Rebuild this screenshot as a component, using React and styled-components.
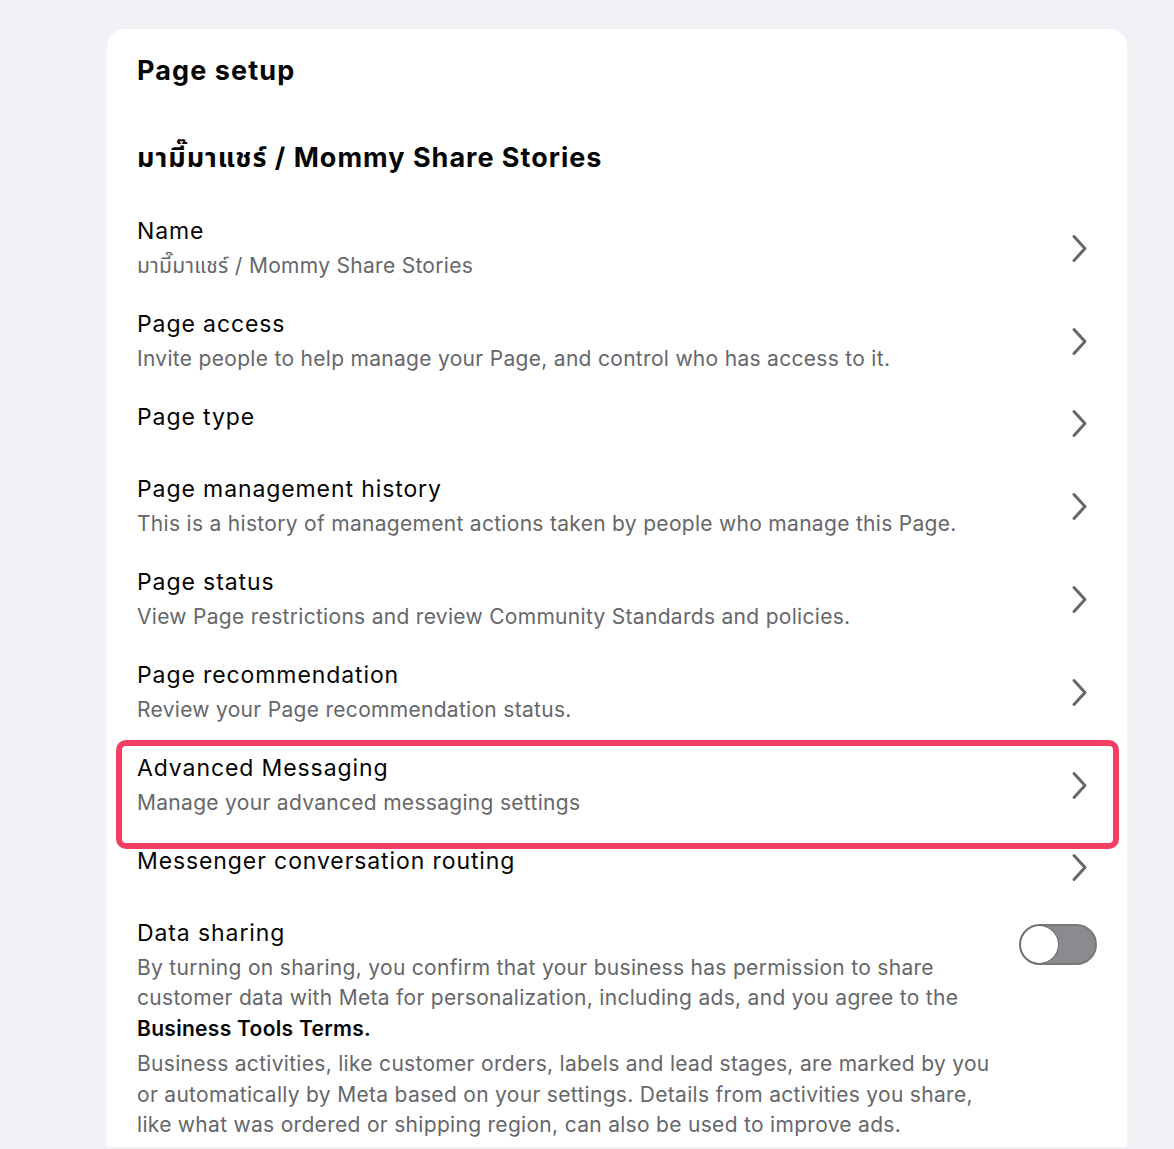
import React, { useState } from "react";
import styled, { createGlobalStyle, css } from "styled-components";

const GlobalStyle = createGlobalStyle`
    body {
        margin: 0;
        background: #f0f2f5;
        font-family: Inter, "Noto Sans", "Noto Sans Thai", "Loma", "Garuda", sans-serif;
        color: #050505;
        -webkit-font-smoothing: antialiased;
    }
`;

const settings = [
    { title: "Name", sub: "มามี๊มาแชร์ / Mommy Share Stories" },
    { title: "Page access", sub: "Invite people to help manage your Page, and control who has access to it." },
    { title: "Page type" },
    { title: "Page management history", sub: "This is a history of management actions taken by people who manage this Page." },
    { title: "Page status", sub: "View Page restrictions and review Community Standards and policies." },
    { title: "Page recommendation", sub: "Review your Page recommendation status." },
    { title: "Advanced Messaging", sub: "Manage your advanced messaging settings", highlighted: true },
    { title: "Messenger conversation routing" },
];

const Chevron = () => (
    <svg width="17" height="29" viewBox="0 0 17 29" fill="none">
        <path d="M3 2.5 L14 14.5 L3 26.5" stroke="#65676b" strokeWidth="3" strokeLinecap="round" strokeLinejoin="round" />
    </svg>
);

const App = () => {
    const [sharing, setSharing] = useState(false);

    return (
        <Page>
            <GlobalStyle />
            <Card>
                <Heading>Page setup</Heading>
                <PageName>มามี๊มาแชร์ / Mommy Share Stories</PageName>
                {settings.map((item) => (
                    <Row key={item.title} highlighted={item.highlighted}>
                        <RowText>
                            <RowTitle>{item.title}</RowTitle>
                            {item.sub && <RowSub>{item.sub}</RowSub>}
                        </RowText>
                        <ChevronBox>
                            <Chevron />
                        </ChevronBox>
                    </Row>
                ))}
                <ToggleRow>
                    <RowText>
                        <RowTitle>Data sharing</RowTitle>
                        <Paragraph>
                            By turning on sharing, you confirm that your business has permission to share
                            <br />
                            customer data with Meta for personalization, including ads, and you agree to the
                            <br />
                            <Strong>Business Tools Terms.</Strong>
                        </Paragraph>
                        <Paragraph>
                            Business activities, like customer orders, labels and lead stages, are marked by you
                            <br />
                            or automatically by Meta based on your settings. Details from activities you share,
                            <br />
                            like what was ordered or shipping region, can also be used to improve ads.
                        </Paragraph>
                    </RowText>
                    <Switch on={sharing} onClick={() => setSharing(!sharing)} aria-label="Data sharing" />
                </ToggleRow>
            </Card>
        </Page>
    );
};

const Page = styled.div`
    padding: 29px 47px 0 107px;
`;

const Card = styled.div`
    background: #ffffff;
    border-radius: 18px 18px 0 0;
    padding: 22px 30px 6px;
`;

const Heading = styled.h1`
    margin: 0;
    font-size: 27px;
    line-height: 40px;
    font-weight: 700;
    letter-spacing: 1.1px;
`;

const PageName = styled.h2`
    margin: 49px 0 26px;
    font-size: 27px;
    line-height: 36px;
    font-weight: 700;
    letter-spacing: 1px;
`;

const Row = styled.div`
    position: relative;
    display: flex;
    align-items: center;
    min-height: 43px;
    padding: 14px 0 14.2px;

    ${(p) =>
        p.highlighted &&
        css`
            &::after {
                content: "";
                position: absolute;
                top: 1px;
                left: -21px;
                right: -22px;
                bottom: -17px;
                border: 6px solid #f43e64;
                border-radius: 10px;
                pointer-events: none;
            }
        `}
`;

const RowText = styled.div`
    flex: 1;
    align-self: flex-start;
`;

const RowTitle = styled.div`
    font-size: 23px;
    line-height: 30px;
    font-weight: 400;
    letter-spacing: 0.9px;
    color: #050505;
`;

const RowSub = styled.div`
    margin-top: 5px;
    font-size: 21px;
    line-height: 30px;
    letter-spacing: 0.3px;
    color: #65676b;
`;

const ChevronBox = styled.div`
    display: flex;
    margin-right: 9px;
`;

const ToggleRow = styled.div`
    display: flex;
    align-items: flex-start;
    padding: 14px 0 0;
`;

const Paragraph = styled.p`
    margin: 5px 0 0;
    font-size: 21px;
    line-height: 30.5px;
    letter-spacing: 0.3px;
    color: #65676b;
`;

const Strong = styled.span`
    font-weight: 600;
    color: #050505;
`;

const Switch = styled.button`
    position: relative;
    flex-shrink: 0;
    width: 78px;
    height: 41px;
    margin-top: 6px;
    padding: 0;
    border: 2px solid #77787c;
    border-radius: 21px;
    background: ${(p) => (p.on ? "#0866ff" : "#8a8b8f")};
    cursor: pointer;

    &::after {
        content: "";
        position: absolute;
        top: 0;
        left: ${(p) => (p.on ? "37px" : "0")};
        width: 37px;
        height: 37px;
        border-radius: 50%;
        background: #ffffff;
        box-shadow: 0 0 0 1px #6b6c70;
    }
`;

export default App;
